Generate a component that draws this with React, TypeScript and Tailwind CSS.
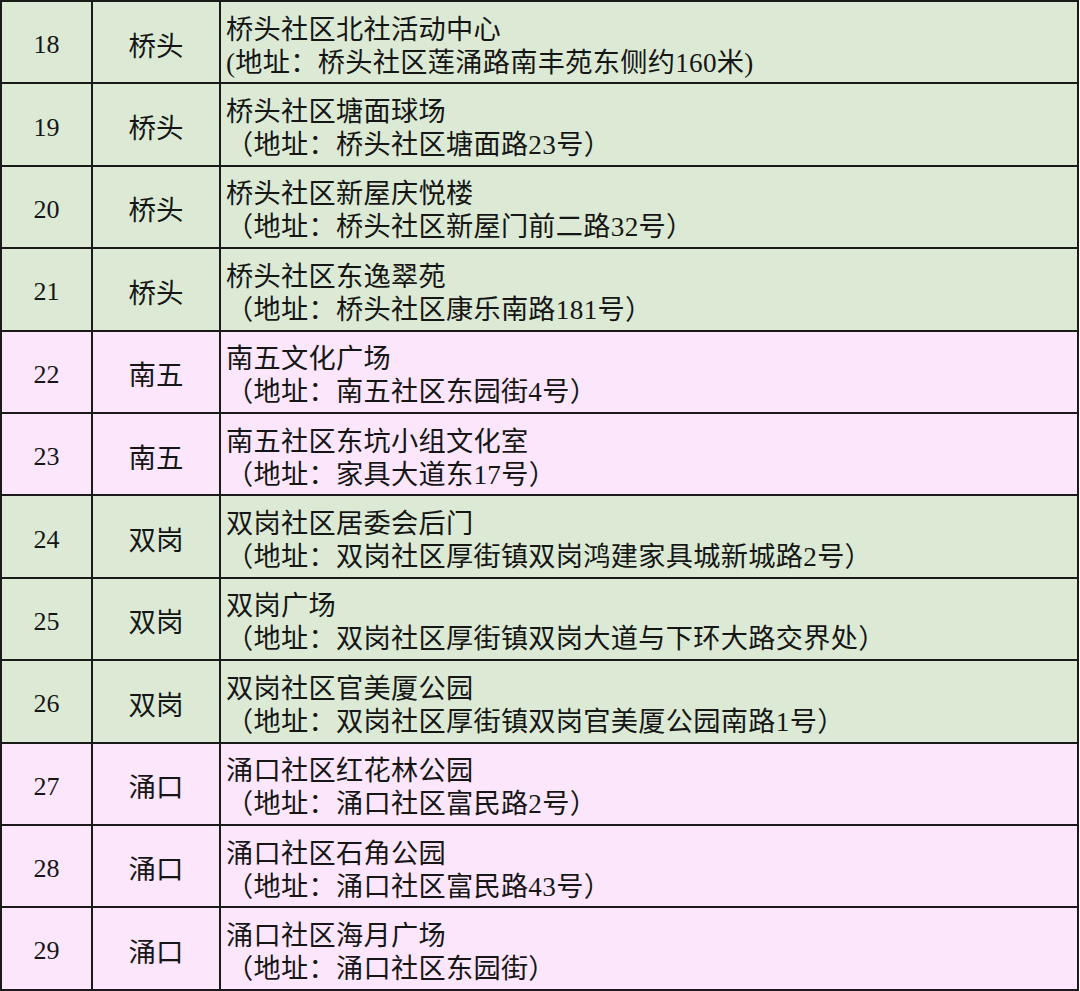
import React from 'react';

type Row = { no: number; area: string; name: string; addr: string };

const rows: Row[] = [
  { no: 18, area: '桥头', name: '桥头社区北社活动中心', addr: '(地址：桥头社区莲涌路南丰苑东侧约160米)' },
  { no: 19, area: '桥头', name: '桥头社区塘面球场', addr: '（地址：桥头社区塘面路23号）' },
  { no: 20, area: '桥头', name: '桥头社区新屋庆悦楼', addr: '（地址：桥头社区新屋门前二路32号）' },
  { no: 21, area: '桥头', name: '桥头社区东逸翠苑', addr: '（地址：桥头社区康乐南路181号）' },
  { no: 22, area: '南五', name: '南五文化广场', addr: '（地址：南五社区东园街4号）' },
  { no: 23, area: '南五', name: '南五社区东坑小组文化室', addr: '（地址：家具大道东17号）' },
  { no: 24, area: '双岗', name: '双岗社区居委会后门', addr: '（地址：双岗社区厚街镇双岗鸿建家具城新城路2号）' },
  { no: 25, area: '双岗', name: '双岗广场', addr: '（地址：双岗社区厚街镇双岗大道与下环大路交界处）' },
  { no: 26, area: '双岗', name: '双岗社区官美厦公园', addr: '（地址：双岗社区厚街镇双岗官美厦公园南路1号）' },
  { no: 27, area: '涌口', name: '涌口社区红花林公园', addr: '（地址：涌口社区富民路2号）' },
  { no: 28, area: '涌口', name: '涌口社区石角公园', addr: '（地址：涌口社区富民路43号）' },
  { no: 29, area: '涌口', name: '涌口社区海月广场', addr: '（地址：涌口社区东园街）' },
];

// 桥头 and 双岗 rows are green, 南五 and 涌口 rows are pink
const green = new Set(['桥头', '双岗']);

export default function App() {
  return (
    <div className="w-[1080px] h-[991px] bg-white text-[#161616] font-['Liberation_Serif','Noto_Sans_CJK_SC',serif]">
      <table className="w-[1079px] border-collapse table-fixed">
        <colgroup>
          <col className="w-[91px]" />
          <col className="w-[128px]" />
          <col />
        </colgroup>
        <tbody>
          {rows.map((r) => (
            <tr key={r.no} className={`h-[82.4px] ${green.has(r.area) ? 'bg-[#dcead5]' : 'bg-[#fce6fb]'}`}>
              <td className="border-2 border-[#1a1a1a] text-center align-middle text-[26px] pt-[5px]">{r.no}</td>
              <td className="border-2 border-[#1a1a1a] text-center align-middle text-[27.5px] pt-[8px]">{r.area}</td>
              <td className="border-2 border-[#1a1a1a] align-middle pl-[5px] pt-[9px] text-[27.2px] leading-[33px] tracking-[0.3px]">
                <div>{r.name}</div>
                <div>{r.addr}</div>
              </td>
            </tr>
          ))}
        </tbody>
      </table>
    </div>
  );
}
